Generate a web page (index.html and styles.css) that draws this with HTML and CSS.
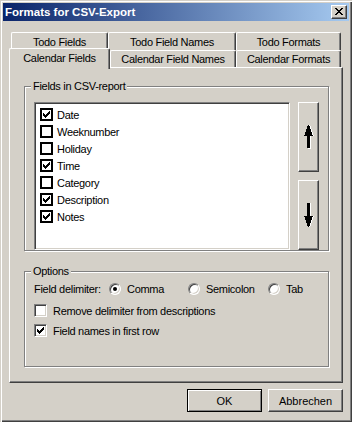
FILE: index.html
```html
<!DOCTYPE html>
<html lang="en">
<head>
  <meta charset="UTF-8">
  <meta name="viewport" content="width=device-width, initial-scale=1.0">
  <title>Formats for CSV-Export</title>
  <link rel="stylesheet" href="styles.css">
</head>
<body>
  <!-- shared glyphs -->
  <svg class="defs" width="0" height="0">
    <symbol id="tick" viewBox="0 0 7 7">
      <path d="M6 0h1v1H6zM5 1h2v1H5zM0 2h1v1H0zM4 2h3v1H4zM0 3h2v1H0zM3 3h3v1H3zM0 4h5v1H0zM1 5h3v1H1zM2 6h1v1H2z"/>
    </symbol>
  </svg>

  <div class="window">
    <div class="titlebar">
      <span class="title">Formats for CSV-Export</span>
      <button class="close">
        <svg width="8" height="7" viewBox="0 0 8 7" shape-rendering="crispEdges">
          <path d="M0 0h2v1H0zM6 0h2v1H6zM1 1h2v1H1zM5 1h2v1H5zM2 2h4v1H2zM3 3h2v1H3zM2 4h4v1H2zM1 5h2v1H1zM5 5h2v1H5zM0 6h2v1H0zM6 6h2v1H6z"/>
        </svg>
      </button>
    </div>

    <!-- Tabs -->
    <div class="tabs">
      <div class="tab-row back">
        <div class="tab t-fields">Todo Fields</div>
        <div class="tab t-names">Todo Field Names</div>
        <div class="tab t-formats">Todo Formats</div>
      </div>
      <div class="tab-row front">
        <div class="tab active">Calendar Fields</div>
        <div class="tab t-cal-names">Calendar Field Names</div>
        <div class="tab t-formats">Calendar Formats</div>
      </div>
    </div>

    <div class="panel">
      <!-- Fields group -->
      <div class="group fields">
        <span class="legend">Fields in CSV-report</span>
        <ul class="field-list">
          <li><span class="lbox"><svg width="7" height="7"><use href="#tick"/></svg></span>Date</li>
          <li><span class="lbox"></span>Weeknumber</li>
          <li><span class="lbox"></span>Holiday</li>
          <li><span class="lbox"><svg width="7" height="7"><use href="#tick"/></svg></span>Time</li>
          <li><span class="lbox"></span>Category</li>
          <li><span class="lbox"><svg width="7" height="7"><use href="#tick"/></svg></span>Description</li>
          <li><span class="lbox"><svg width="7" height="7"><use href="#tick"/></svg></span>Notes</li>
        </ul>
        <div class="move">
          <button class="move-btn">
            <svg width="10" height="24" viewBox="0 0 10 24" shape-rendering="crispEdges">
              <polygon fill="#fff" points="5,0 6,0 10,11 1,11"/>
              <rect fill="#fff" x="4" y="11" width="3" height="13"/>
              <polygon points="4,0 5,0 9,11 0,11"/>
              <rect x="3" y="11" width="3" height="12"/>
            </svg>
          </button>
          <button class="move-btn">
            <svg width="10" height="24" viewBox="0 0 10 24" shape-rendering="crispEdges">
              <rect fill="#fff" x="4" y="0" width="3" height="13"/>
              <polygon fill="#fff" points="1,13 10,13 6,24 5,24"/>
              <rect x="3" y="0" width="3" height="13"/>
              <polygon points="0,13 9,13 5,24 4,24"/>
            </svg>
          </button>
        </div>
      </div>

      <!-- Options group -->
      <div class="group options">
        <span class="legend">Options</span>
        <div class="delim-row">
          <span class="delim-label">Field delimiter:</span>
          <label class="radio-opt comma"><span class="radio checked"></span>Comma</label>
          <label class="radio-opt semi"><span class="radio"></span>Semicolon</label>
          <label class="radio-opt"><span class="radio"></span>Tab</label>
        </div>
        <label class="check-row"><span class="sbox"></span>Remove delimiter from descriptions</label>
        <label class="check-row second"><span class="sbox"><svg width="7" height="7"><use href="#tick"/></svg></span>Field names in first row</label>
      </div>
    </div>

    <div class="actions">
      <button class="btn default">OK</button>
      <button class="btn">Abbrechen</button>
    </div>
  </div>
</body>
</html>
```

FILE: styles.css
```css
/* General */
body {
  margin: 0;
  font-family: "Liberation Sans", Arial, sans-serif;
  font-size: 11px;
  letter-spacing: -0.3px;
  color: #000;
}

.defs {
  display: block;
  width: 0;
  height: 0;
}

.window {
  width: 352px;
  height: 422px;
  box-sizing: border-box;
  padding: 3px;
  background: #d4d0c8;
  box-shadow: inset 1px 1px #d4d0c8, inset 2px 2px #fff,
              inset -1px -1px #404040, inset -2px -2px #808080;
  display: flex;
  flex-direction: column;
}

/* Title bar */
.titlebar {
  height: 18px;
  padding: 0 2px;
  display: flex;
  align-items: center;
  justify-content: space-between;
  background: linear-gradient(to right, #0a246a, #a6caf0);
  color: #fff;
}

.title {
  font-weight: bold;
  font-size: 11.5px;
  letter-spacing: 0;
}

.close {
  width: 16px;
  height: 14px;
  box-sizing: border-box;
  padding: 0 0 1px;
  display: flex;
  align-items: center;
  justify-content: center;
  background: #d4d0c8;
  border: 1px solid;
  border-color: #fff #404040 #404040 #fff;
  box-shadow: inset -1px -1px #808080;
}

/* Tabs */
.tabs {
  margin-top: 11px;
  display: flex;
  flex-direction: column;
}

.tab-row {
  display: flex;
}

.tab-row.back {
  margin-left: 8px;
  height: 18px;
}

.tab-row.front {
  margin-left: 6px;
  margin-top: -2px;
  height: 20px;
  align-items: flex-start;
}

.tab {
  box-sizing: border-box;
  height: 18px;
  display: flex;
  align-items: center;
  justify-content: center;
  background: #d4d0c8;
  border: 1px solid;
  border-bottom: 0;
  border-color: #fff #404040 #fff #fff;
  border-radius: 2px 2px 0 0;
  box-shadow: inset -1px 0 #808080;
}

.t-fields { width: 97px; }
.t-names { width: 128px; }
.t-formats { width: 105px; }
.t-cal-names { width: 126px; }

.front .tab {
  margin-top: 2px;
  height: 17px;
}

.front .tab.active {
  width: 101px;
  height: 21px;
  margin-top: 0;
  padding-bottom: 2px;
  position: relative;
  z-index: 1;
}

/* Panel */
.panel {
  margin: -1px 6px 0;
  height: 316px;
  box-sizing: border-box;
  padding: 18px 13px 0 14px;
  border: 1px solid;
  border-color: #fff #404040 #404040 #fff;
  box-shadow: inset -1px -1px #808080;
}

.group {
  position: relative;
  border: 1px solid #808080;
  box-shadow: 1px 1px 0 #fff, inset 1px 1px 0 #fff;
}

.legend {
  position: absolute;
  top: -7px;
  left: 6px;
  padding: 0 2px;
  line-height: 13px;
  background: #d4d0c8;
}

.fields {
  display: flex;
  gap: 8px;
  padding: 15px 9px 0;
}

.field-list {
  flex: 1;
  height: 148px;
  box-sizing: border-box;
  margin: 0;
  padding: 3px 0 0 5px;
  list-style: none;
  background: #fff;
  border: 1px solid;
  border-color: #808080 #fff #fff #808080;
  box-shadow: inset 1px 1px #404040, inset -1px -1px #d4d0c8;
}

.field-list li {
  height: 17px;
  display: flex;
  align-items: center;
  gap: 4px;
}

.lbox {
  width: 13px;
  height: 13px;
  box-sizing: border-box;
  border: 2px solid #000;
  background: #fff;
  display: flex;
  align-items: center;
  justify-content: center;
}

.move {
  width: 21px;
  display: flex;
  flex-direction: column;
  gap: 8px;
}

.move-btn {
  height: 70px;
  padding: 0;
  display: flex;
  align-items: center;
  justify-content: center;
  background: #d4d0c8;
  border: 1px solid;
  border-color: #fff #404040 #404040 #fff;
  box-shadow: inset -1px -1px #808080;
}

/* Options */
.options {
  margin-top: 20px;
  height: 96px;
  box-sizing: border-box;
  padding: 10px 9px 0;
}

.delim-row {
  height: 14px;
  display: flex;
  align-items: center;
}

.delim-label {
  width: 75px;
}

.radio-opt {
  display: flex;
  align-items: center;
  gap: 6px;
}

.radio-opt.comma { width: 79px; }
.radio-opt.semi { width: 80px; }

.radio {
  width: 12px;
  height: 12px;
  box-sizing: border-box;
  border-radius: 50%;
  border: 1px solid;
  border-color: #808080 #fff #fff #808080;
  box-shadow: inset 1px 1px #404040, inset -1px -1px #d4d0c8;
  background: #fff;
  display: flex;
  align-items: center;
  justify-content: center;
}

.radio.checked::after {
  content: "";
  width: 4px;
  height: 4px;
  border-radius: 50%;
  background: #000;
}

.check-row {
  height: 13px;
  margin-top: 8px;
  display: flex;
  align-items: center;
  gap: 6px;
}

.check-row.second {
  margin-top: 7px;
}

.sbox {
  width: 13px;
  height: 13px;
  box-sizing: border-box;
  border: 1px solid;
  border-color: #808080 #fff #fff #808080;
  box-shadow: inset 1px 1px #404040, inset -1px -1px #d4d0c8;
  background: #fff;
  display: flex;
  align-items: center;
  justify-content: center;
}

/* Dialog buttons */
.actions {
  margin: 6px 6px 0 0;
  display: flex;
  justify-content: flex-end;
  gap: 6px;
}

.btn {
  width: 75px;
  height: 23px;
  padding: 0;
  font: inherit;
  color: #000;
  background: #d4d0c8;
  border: 1px solid;
  border-color: #fff #404040 #404040 #fff;
  box-shadow: inset -1px -1px #808080;
}

.btn.default {
  border-color: #000;
  box-shadow: inset 1px 1px #fff, inset -1px -1px #808080;
}
```
